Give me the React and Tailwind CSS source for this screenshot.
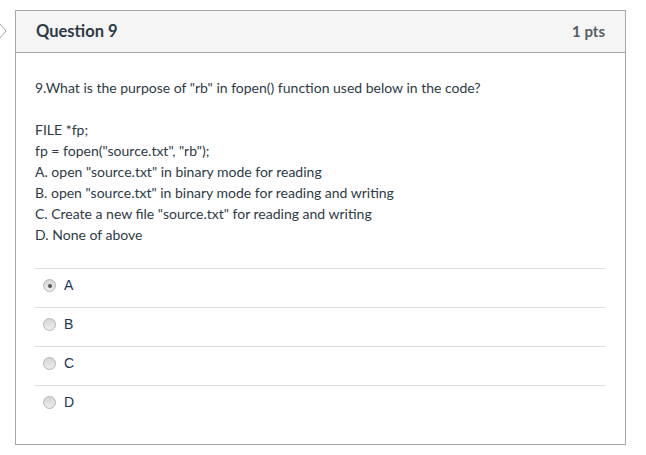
import React, { useState } from 'react';

const Radio = ({ checked }) => (
  <span className="relative inline-block w-[13px] h-[13px] rounded-full border border-[#b5b5b5] bg-gradient-to-b from-[#d6d6d6] to-[#ededed]">
    {checked && (
      <span className="absolute left-[3.5px] top-[3.5px] w-[4px] h-[4px] rounded-full bg-[#555]" />
    )}
  </span>
);

const App = () => {
  const [answer, setAnswer] = useState('A');
  const options = ['A', 'B', 'C', 'D'];

  return (
    <div className="relative w-[646px] h-[455px] bg-white pt-[10px] pl-[15px] font-['Lato','Noto_Sans',sans-serif] text-[#2d3b45]">
      {/* chevron de la pregunta anterior */}
      <svg className="absolute left-0 top-[23px]" width="8" height="16" viewBox="0 0 8 16">
        <path d="M0 1 L6 8 L0 15" fill="none" stroke="#9aa5ad" strokeWidth="1" />
      </svg>

      <div className="w-[611px] h-[435px] border border-[#a8a8a8] flex flex-col">
        <div className="h-[42px] bg-[#f5f5f5] border-b border-[#a8a8a8] flex items-center justify-between px-[20px] pb-[1px]">
          <span className="text-[16.5px] font-bold">Question 9</span>
          <span className="text-[15px] font-bold text-[#555d62]">1 pts</span>
        </div>

        <div className="px-[19px] pt-[24px] text-[14px] leading-[21px]">
          <p>9.What is the purpose of "rb" in fopen() function used below in the code?</p>
          <p className="mt-[21px]">FILE *fp;</p>
          <p>fp = fopen("source.txt", "rb");</p>
          <p>A. open "source.txt" in binary mode for reading</p>
          <p>B. open "source.txt" in binary mode for reading and writing</p>
          <p>C. Create a new file "source.txt" for reading and writing</p>
          <p>D. None of above</p>

          <div className="mt-[23px] mr-px">
            {options.map((opt) => (
              <label
                key={opt}
                onClick={() => setAnswer(opt)}
                className="h-[39px] border-t border-[#dcdcdc] flex items-center gap-[8px] pl-[8px] pb-[5px] cursor-pointer"
              >
                <Radio checked={answer === opt} />
                <span className="font-['Liberation_Sans',sans-serif] text-[14px] text-[#1d3557]">{opt}</span>
              </label>
            ))}
          </div>
        </div>
      </div>
    </div>
  );
};

export default App;
